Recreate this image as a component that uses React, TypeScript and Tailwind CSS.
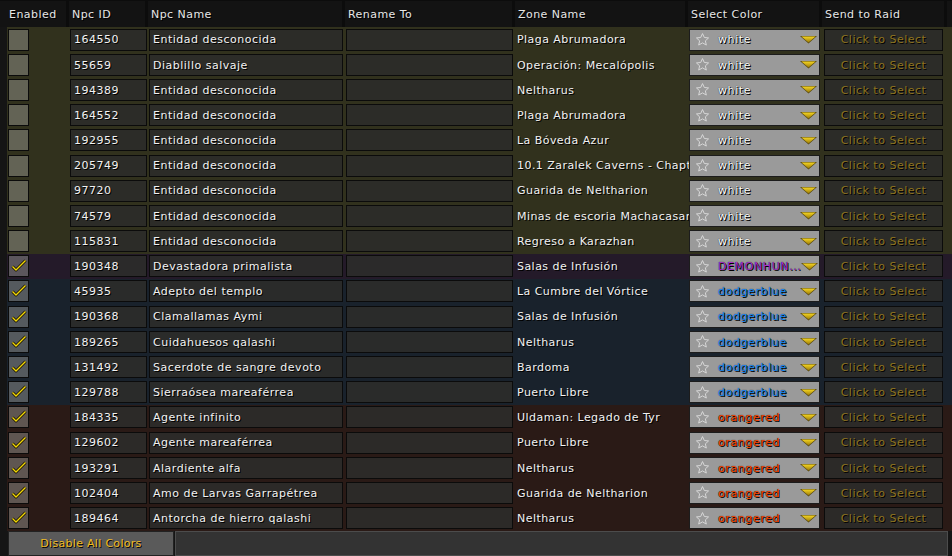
import React from "react";

type NpcRow = {
  enabled: boolean;
  id: string;
  name: string;
  zone: string;
  color: string;
};

const ROWS: NpcRow[] = [
  { enabled: false, id: "164550", name: "Entidad desconocida", zone: "Plaga Abrumadora", color: "white" },
  { enabled: false, id: "55659", name: "Diablillo salvaje", zone: "Operación: Mecalópolis", color: "white" },
  { enabled: false, id: "194389", name: "Entidad desconocida", zone: "Neltharus", color: "white" },
  { enabled: false, id: "164552", name: "Entidad desconocida", zone: "Plaga Abrumadora", color: "white" },
  { enabled: false, id: "192955", name: "Entidad desconocida", zone: "La Bóveda Azur", color: "white" },
  { enabled: false, id: "205749", name: "Entidad desconocida", zone: "10.1 Zaralek Caverns - Chapter 1", color: "white" },
  { enabled: false, id: "97720", name: "Entidad desconocida", zone: "Guarida de Neltharion", color: "white" },
  { enabled: false, id: "74579", name: "Entidad desconocida", zone: "Minas de escoria Machacasangre", color: "white" },
  { enabled: false, id: "115831", name: "Entidad desconocida", zone: "Regreso a Karazhan", color: "white" },
  { enabled: true, id: "190348", name: "Devastadora primalista", zone: "Salas de Infusión", color: "DEMONHUNTER" },
  { enabled: true, id: "45935", name: "Adepto del templo", zone: "La Cumbre del Vórtice", color: "dodgerblue" },
  { enabled: true, id: "190368", name: "Clamallamas Aymi", zone: "Salas de Infusión", color: "dodgerblue" },
  { enabled: true, id: "189265", name: "Cuidahuesos qalashi", zone: "Neltharus", color: "dodgerblue" },
  { enabled: true, id: "131492", name: "Sacerdote de sangre devoto", zone: "Bardoma", color: "dodgerblue" },
  { enabled: true, id: "129788", name: "Sierraósea mareaférrea", zone: "Puerto Libre", color: "dodgerblue" },
  { enabled: true, id: "184335", name: "Agente infinito", zone: "Uldaman: Legado de Tyr", color: "orangered" },
  { enabled: true, id: "129602", name: "Agente mareaférrea", zone: "Puerto Libre", color: "orangered" },
  { enabled: true, id: "193291", name: "Alardiente alfa", zone: "Neltharus", color: "orangered" },
  { enabled: true, id: "102404", name: "Amo de Larvas Garrapétrea", zone: "Guarida de Neltharion", color: "orangered" },
  { enabled: true, id: "189464", name: "Antorcha de hierro qalashi", zone: "Neltharus", color: "orangered" },
];

// row tint + label colour for each colour choice
const TINT: Record<string, { row: string; text: string; label: string }> = {
  white: { row: "bg-[#31311d]", text: "text-white", label: "white" },
  DEMONHUNTER: { row: "bg-[#241a29]", text: "text-[#a52fd0]", label: "DEMONHUN..." },
  dodgerblue: { row: "bg-[#19222c]", text: "text-[#1e90ff]", label: "dodgerblue" },
  orangered: { row: "bg-[#2a1a16]", text: "text-[#ff4500]", label: "orangered" },
};

const shadow = "[text-shadow:1px_1px_0_#000]";
const cell = "h-[22px] border border-[#0b0b0b] bg-[rgba(44,44,42,0.9)] flex items-center pt-[2px]";

const Check = () => (
  <svg width="18" height="17" viewBox="0 0 18 17" className="absolute left-[1px] top-[1px]">
    <path d="M2.5 9.5 L6 13 L15.5 3.5" fill="none" stroke="#1a1400" strokeWidth="3" strokeLinejoin="round" />
    <path d="M2.5 9.5 L6 13 L15.5 3.5" fill="none" stroke="#f2d808" strokeWidth="1.4" strokeLinejoin="round" />
  </svg>
);

const Star = () => (
  <svg width="15" height="15" viewBox="0 0 24 24" className="shrink-0">
    <path
      d="M12 2.5l2.9 6.3 6.8.7-5.1 4.6 1.5 6.8L12 17.4l-6.1 3.5 1.5-6.8-5.1-4.6 6.8-.7z"
      fill="none"
      stroke="#d8d8d8"
      strokeWidth="1.6"
      strokeLinejoin="round"
    />
  </svg>
);

const Arrow = () => (
  <svg width="17" height="9" viewBox="0 0 17 9" className="shrink-0">
    <defs>
      <linearGradient id="arr" x1="0" y1="0" x2="0" y2="1">
        <stop offset="0" stopColor="#f6d624" />
        <stop offset="1" stopColor="#9a7a08" />
      </linearGradient>
    </defs>
    <polygon points="0,1 17,1 8.5,8.5" fill="#5a4a10" />
    <polygon points="1.5,1.5 15.5,1.5 8.5,7.5" fill="url(#arr)" />
  </svg>
);

const HEADERS = [
  { label: "Enabled", w: "w-[66px] pl-[9px]" },
  { label: "Npc ID", w: "w-[76px] pl-[3px]" },
  { label: "Npc Name", w: "w-[194px] pl-[3px]" },
  { label: "Rename To", w: "w-[167px] pl-[3px]" },
  { label: "Zone Name", w: "w-[170px] pl-[3px]" },
  { label: "Select Color", w: "w-[131px] pl-[3px]" },
  { label: "Send to Raid", w: "w-[122px] pl-[3px]" },
];

export default function App() {
  return (
    <div className="w-[952px] h-[556px] overflow-hidden bg-[#151515] font-['DejaVu_Sans',sans-serif] text-[11px] flex flex-col">
      <div className="h-[27px] flex gap-[3px] bg-[#0c0c0c] pt-[1px]">
        {HEADERS.map((h) => (
          <div
            key={h.label}
            className={`${h.w} h-[26px] bg-[#131313] flex items-center pt-[2px] text-[#e6e6e6] tracking-[0.45px] ${shadow}`}
          >
            {h.label}
          </div>
        ))}
        <div className="flex-1 bg-[#131313]" />
      </div>

      <div className="h-[504px] flex flex-col pl-[7px]">
        {ROWS.map((r) => {
          const t = TINT[r.color];
          return (
            <div key={r.id} className={`h-[25.2px] flex items-center ${t.row}`}>
              <div className="ml-px relative w-[21px] h-[22px] border border-[#0b0b0b] bg-[rgba(170,170,165,0.42)]">
                {r.enabled && <Check />}
              </div>
              <div className={`ml-[41px] w-[77px] ${cell} pl-[3px] text-[#f2f2f2] tracking-[0.5px] ${shadow}`}>
                {r.id}
              </div>
              <div className={`ml-[2px] w-[194px] ${cell} pl-[3px] text-[#f2f2f2] tracking-[0.5px] ${shadow}`}>
                {r.name}
              </div>
              <div className={`ml-[3px] w-[167px] ${cell}`} />
              <div className={`w-[176px] h-[22px] flex items-center pt-[2px] pl-[4px] overflow-hidden whitespace-nowrap text-[#f2f2f2] tracking-[0.45px] ${shadow}`}>
                {r.zone}
              </div>
              <div className="w-[131px] h-[22px] border border-[#1c1c1c] bg-[#9a9a9a] flex items-center pl-[5px] pr-[2px]">
                <Star />
                <span className={`ml-[8px] pt-[2px] flex-1 tracking-[0.6px] whitespace-nowrap ${t.text} [text-shadow:1px_1px_0_#000,0_0_1px_#000]`}>
                  {t.label}
                </span>
                <Arrow />
              </div>
              <div className={`ml-[4px] w-[119px] ${cell} justify-center text-[#8e7420] tracking-[0.5px] ${shadow}`}>
                Click to Select
              </div>
            </div>
          );
        })}
      </div>

      <div className="h-[25px] flex pl-[8px] bg-[#151515]">
        <div className="w-[166px] h-full border border-[#222] bg-[#5a5a5a] flex items-center justify-center pt-[1px] text-[#f0bc24] tracking-[0.3px] [text-shadow:1px_1px_0_#000]">
          Disable All Colors
        </div>
        <div className="ml-px w-[773px] h-full border border-[#4c4c4c] bg-[#333333]" />
      </div>
    </div>
  );
}
